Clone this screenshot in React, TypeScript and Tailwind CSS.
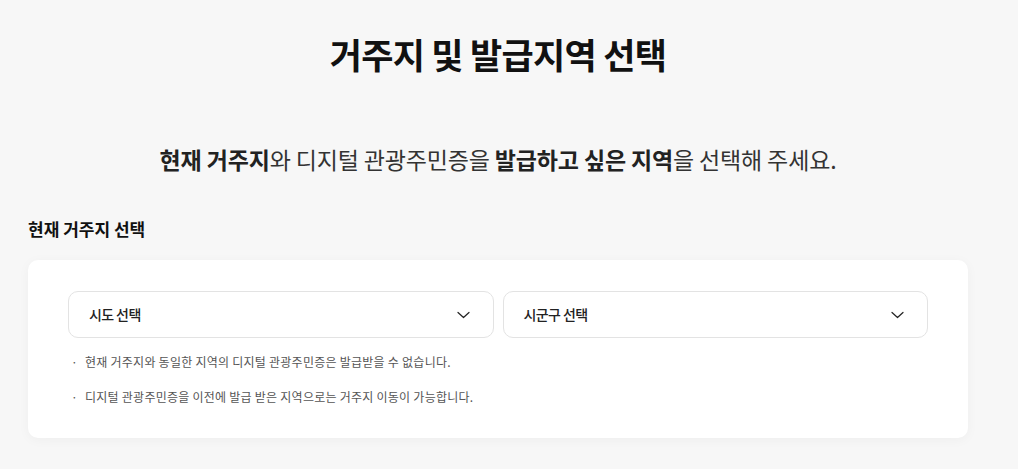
export default function App() {
  return (
    <div
      className="min-h-[469px] w-full bg-[#f7f7f7] text-[#111]"
      style={{ fontFamily: '"Noto Sans CJK KR", "Noto Sans", sans-serif' }}
    >
      <div className="ml-[28px] flex w-[940px] flex-col pt-[30px]">
        {/* page title */}
        <h1 className="text-center text-[35px] font-bold leading-[47px] tracking-[-0.7px] text-[#111]">
          거주지 및 발급지역 선택
        </h1>

        <p className="mt-[67px] text-center text-[23px] leading-[30px] tracking-[-0.15px] text-[#333]">
          <span className="font-bold text-[#222]">현재 거주지</span>와 디지털 관광주민증을{" "}
          <span className="font-bold text-[#222]">발급하고 싶은 지역</span>을 선택해 주세요.
        </p>

        {/* residence select */}
        <h2 className="mt-[43px] text-[17px] font-bold leading-[24px] text-[#111]">현재 거주지 선택</h2>

        <div className="mt-[19px] rounded-[10px] bg-white px-[40px] pb-[32px] pt-[31px] shadow-[0_2px_12px_rgba(0,0,0,0.04)]">
          <div className="flex gap-[9px]">
            <SelectBox label="시도 선택" />
            <SelectBox label="시군구 선택" />
          </div>

          <ul className="mt-[15px] flex flex-col gap-[17px] text-[12px] leading-[18px] tracking-[0.25px] text-[#555]">
            <li className="flex">
              <span className="w-[17px] pl-[3px]">·</span>
              현재 거주지와 동일한 지역의 디지털 관광주민증은 발급받을 수 없습니다.
            </li>
            <li className="flex">
              <span className="w-[17px] pl-[3px]">·</span>
              디지털 관광주민증을 이전에 발급 받은 지역으로는 거주지 이동이 가능합니다.
            </li>
          </ul>
        </div>
      </div>
    </div>
  )
}

function SelectBox({ label }: { label: string }) {
  return (
    <button
      type="button"
      className="flex h-[47px] flex-1 items-center justify-between rounded-[10px] border border-[#e3e3e3] bg-white pl-[20px] pr-[23px]"
    >
      <span className="text-[14px] font-medium tracking-[-0.6px] text-[#222]">{label}</span>
      <svg width="13" height="8" viewBox="0 0 13 8" fill="none">
        <path d="M1 1.5l5.5 5 5.5-5" stroke="#222" strokeWidth="1.2" strokeLinecap="round" strokeLinejoin="round" />
      </svg>
    </button>
  )
}
